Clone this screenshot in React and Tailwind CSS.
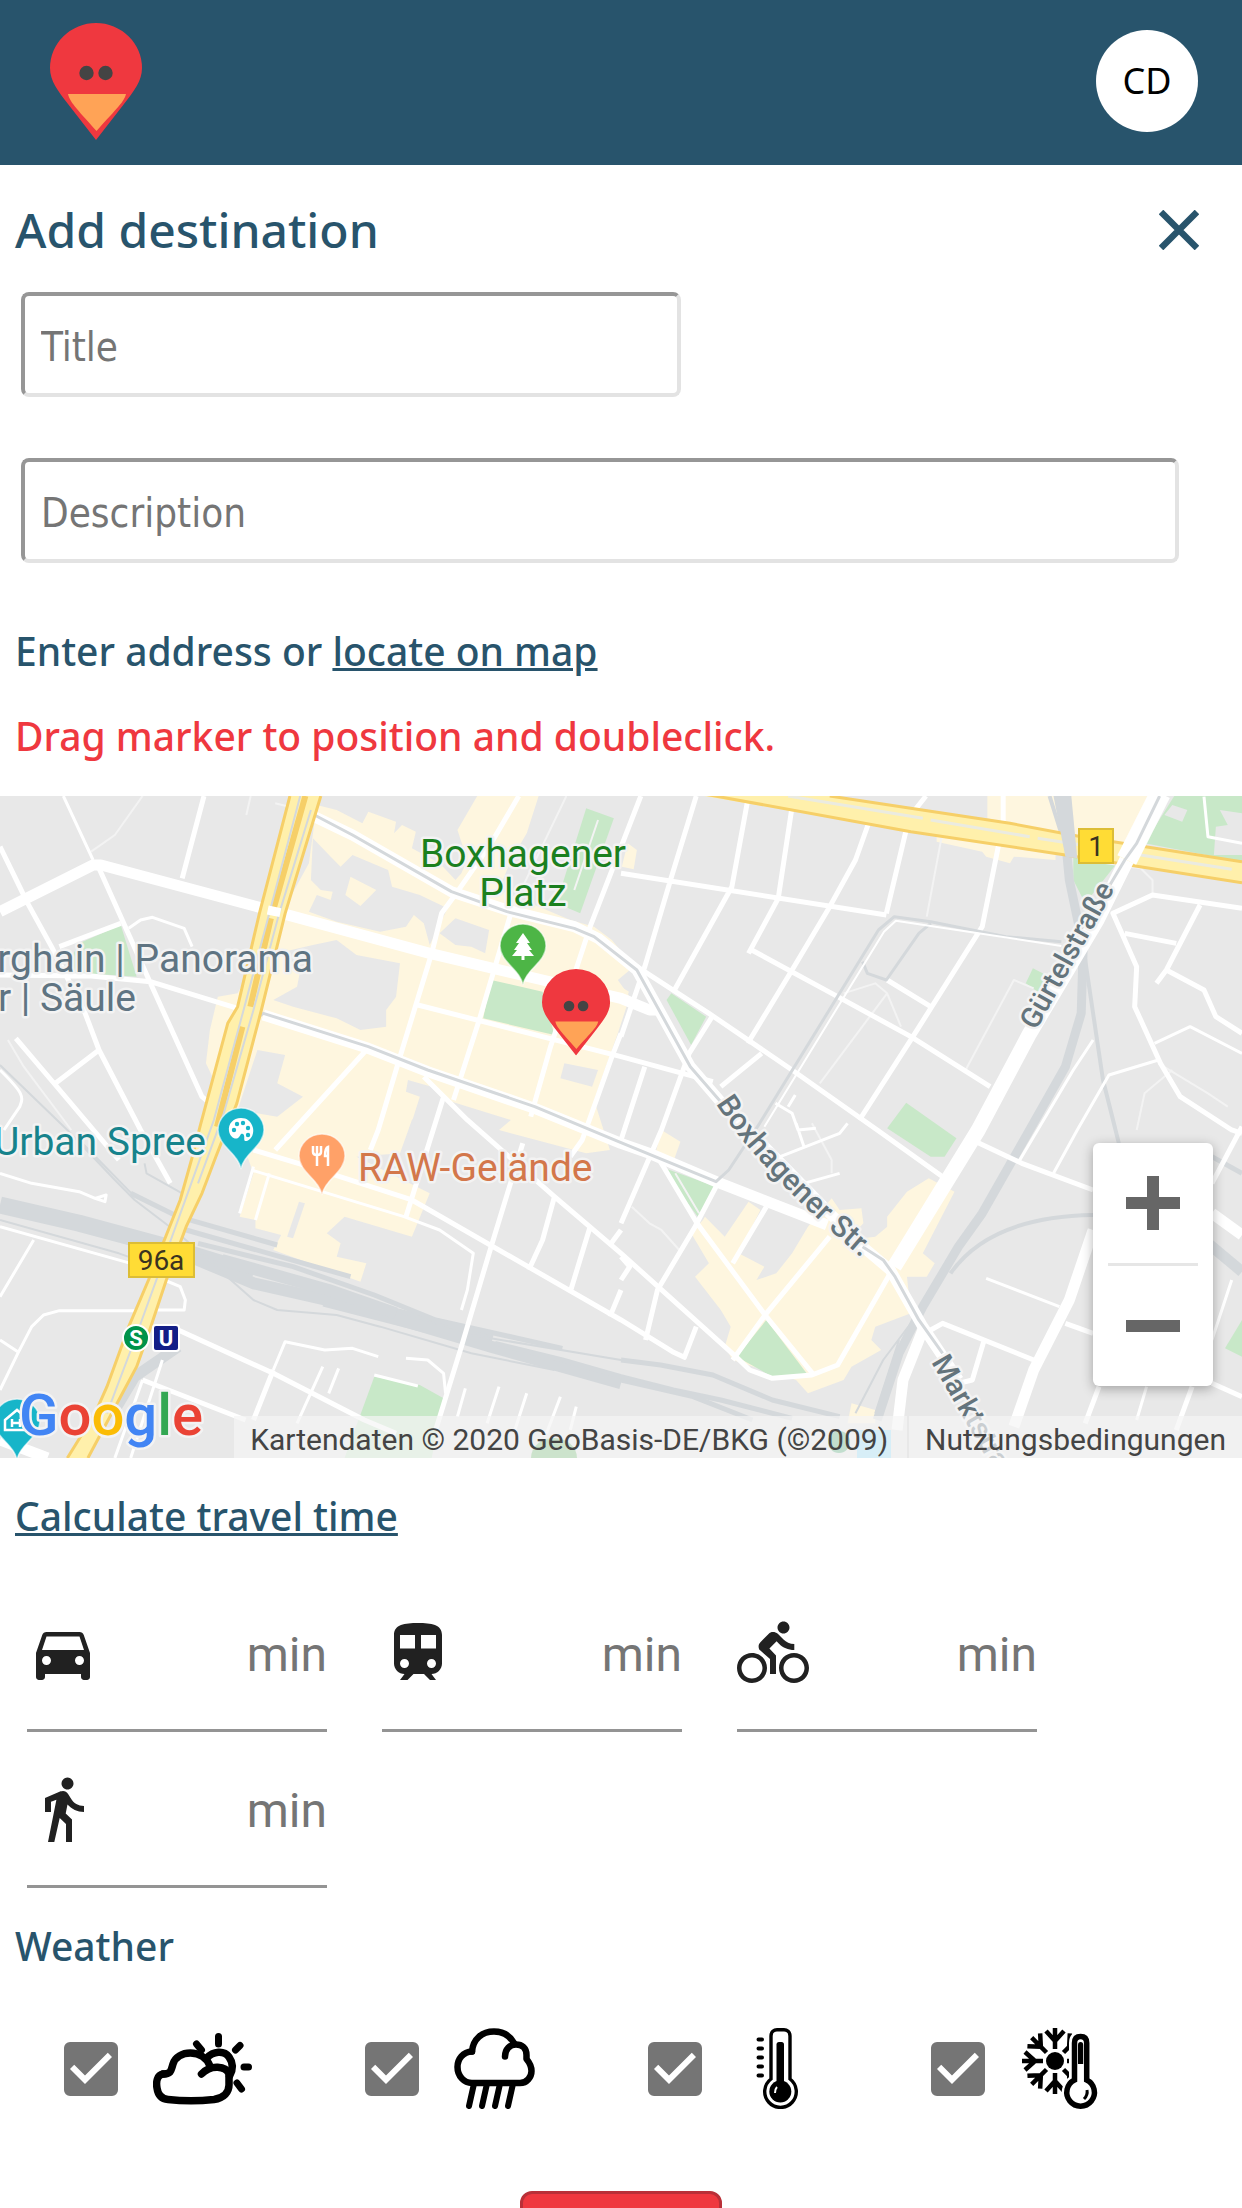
import React from "react";
import { MdCheckBox, MdDirectionsBike, MdDirectionsCar, MdDirectionsWalk } from "react-icons/md";

const SANS = "font-['Noto_Sans','Open_Sans',sans-serif]";

function BirdPin({ className, ...rest }) {
  return (
    <svg viewBox="0 0 92 117" className={className} aria-hidden="true" {...rest}>
      <path d="M46 117L18 81C8 68 0 58 0 45A46 45 0 0 1 92 45C92 58 84 68 74 81Z" fill="#ef383f" />
      <circle cx="36.500" cy="50" r="7.200" fill="#444" />
      <circle cx="55.500" cy="50" r="7.200" fill="#444" />
      <path d="M18 71H76C74 79 68 84 46.500 108C25 84 20 79 18 71Z" fill="#ffa356" />
    </svg>
  );
}

function TrainIcon({ className }) {
  return (
    <svg viewBox="0 0 24 24" fill="currentColor" className={className} aria-hidden="true">
      <path d="M12 2c-4.420 0-8 .5-8 4v9.500C4 17.430 5.570 19 7.500 19L6 21h2.500l2-2h3.500l2 2H18l-1.500-2c1.930 0 3.500-1.570 3.500-3.500V6c0-3.500-3.580-4-8-4zM7.500 17c-.83 0-1.500-.67-1.500-1.500S6.670 14 7.500 14s1.500.67 1.500 1.500S8.330 17 7.500 17zm3.500-6.500H6V6h5v4.500zm5.500 6.500c-.83 0-1.500-.67-1.500-1.500s.67-1.500 1.500-1.500 1.500.67 1.500 1.500-.67 1.500-1.500 1.500zm1.500-6.500h-5V6h5v4.500z" />
    </svg>
  );
}

function SunCloud() {
  return (
    <svg viewBox="0 0 99 81" className="h-[81px] w-[99px]" fill="none" stroke="#000" strokeLinecap="round" strokeLinejoin="round" aria-hidden="true">
      <g strokeWidth="7.500">
        <path d="M10 46C4 47 3 54 4 60C5 67 9 71 15 71.500C28 73 48 73 61 71.500C71 70 76 64 76 57V46C73 38 58 36 48.500 46" />
        <path d="M10 46C18 46 18 43 20 36C24 22 50 20 57 38" />
        <path d="M54 30C60 23 71 22 76 29C81 36 80 42 76.500 48" />
      </g>
      <g strokeWidth="7">
        <path d="M65.500 8.500V16M43.500 16L48.500 22M87 17.500L82.500 22M91 39H95.500M84 55L88.500 61" />
      </g>
    </svg>
  );
}

function RainCloud() {
  return (
    <svg viewBox="0 0 81 81" className="size-[81px]" fill="none" stroke="#000" strokeLinecap="round" strokeLinejoin="round" aria-hidden="true">
      <g strokeWidth="6.500">
        <path d="M18 23.500C9 24 3.500 31 3.500 39C3.500 48 10 55 18 55H66C73 55 77.500 49 77.500 43C77.500 37 75 34 72.500 31V27C72.500 20 68 16.500 62 16.500C56 16.500 51 21 51 28.500" />
        <path d="M18 23.500C19 11 28 3.500 40 3.500C49 3.500 56 8 60 15" />
      </g>
      <path strokeWidth="6" d="M19.500 58L15 78M32.500 58L28 78M45.500 58L41 78M58.500 58L54 78" />
    </svg>
  );
}

function Thermometer() {
  return (
    <svg viewBox="-20 0 81 81" className="size-[81px]" aria-hidden="true">
      <path d="M14 51V8C14 4 17 1.700 20 1.700H27C30 1.700 33 4 33 8V51A15.800 15.800 0 1 1 14 51Z" fill="#fff" stroke="#000" strokeWidth="3.400" />
      <path d="M19.500 56V16.500Q19.500 14 22 14H24.500Q27 14 27 16.500V56Z" />
      <circle cx="23.300" cy="63.500" r="11" />
      <path d="M20 59Q18 61 18 65" fill="none" stroke="#fff" strokeWidth="2" />
      <path d="M1.500 11.500H5M1.500 20.500H5M1.500 29.500H5M1.500 38.500H5M1.500 47.500H5" stroke="#000" strokeWidth="4" strokeLinecap="round" />
    </svg>
  );
}

const FLAKE_ARMS = [0, 45, 90, 135, 180, 225, 270, 315];

function SnowThermometer() {
  return (
    <svg viewBox="-2 0 81 81" className="size-[81px]" aria-hidden="true">
      <circle cx="33" cy="33" r="9" />
      {FLAKE_ARMS.map((a) => (
        <path key={a} transform={`rotate(${a} 33 33)`} d="M33 21V0M33 13L24 3M33 13L42 3" fill="none" stroke="#000" strokeWidth="4.500" />
      ))}
      <path d="M52 52V15Q52 8 58.600 8Q65.500 8 65.500 15V52A14 14 0 1 1 52 52Z" fill="#fff" stroke="#fff" strokeWidth="10" />
      <path d="M52.500 52V15Q52.500 8.500 58.600 8.500Q64.700 8.500 64.700 15V52A13.800 13.800 0 1 1 52.500 52Z" fill="#fff" stroke="#000" strokeWidth="5.500" />
      <path d="M56 36V17Q56 14 58.600 14Q61.200 14 61.200 17V36Z" />
      <path d="M65 62Q66 67 62 71" fill="none" stroke="#000" strokeWidth="3" />
    </svg>
  );
}

/* Base map geometry: survey units, scaled into the 1242 x 662 map frame. */
const BLOCKS = [
  "M800 75L850 90L915 130L930 95L1000 125L995 160L1015 135L1050 155L1040 205L1110 250L1150 300L1165 280L1180 240L1155 150L1205 48H1360L1330 160L1290 240L1260 330L1440 420L1500 440L1545 480L1600 560L1560 600L1590 650L1560 760L1500 960L1540 1110L1480 1120L1260 1050L1290 1020L1100 950L1040 1020L1010 1120L900 1130L1085 1240L1040 1370L870 1310L825 1360L860 1390L850 1430L925 1450L910 1505L690 1410L710 1365L645 1345V1320L605 1310L640 1180L600 1050L520 850L530 750L550 650L600 640L780 250Z",
  "M2493 48H2900L2850 190L2700 175L2493 115Z",
  "M2365 160L2560 195L2665 220V240L2560 230L2550 250L2490 230L2480 215L2365 185Z",
  "M1570 260L1585 190L1608 210L1600 268Z",
  "M1568 620L1588 635L1580 660L1568 650Z",
  "M1670 1050L1718 1085L1700 1145L1655 1120Z",
  "M1775 1320L1780 1310L1830 1370L1890 1265L1920 1290L1865 1420L1930 1460L1910 1500L1960 1480L2000 1420L2040 1340L2060 1310L2100 1255L2120 1290L2175 1285L2180 1330L2140 1380L2210 1370L2240 1340V1310L2290 1235L2345 1195L2410 1235L2330 1420L2360 1450L2340 1490L2290 1490L2300 1600L2210 1640L2200 1680L2225 1710L2150 1760L2130 1800L2040 1840L2010 1800L1850 1740L1830 1700L1845 1640L1820 1590L1755 1490L1790 1450L1745 1360Z",
  "M2150 1870L2210 1890V1930H2140Z",
];
const HOLES = [
  "M790 175L835 230L860 260L890 225L980 270L990 320L1060 345L1130 385L1085 495L1070 430L1045 405L1025 440L960 455L850 425L780 395L800 345L835 360L840 335L810 330L785 300Z",
  "M790 495L850 480L900 525L1010 550L1000 650L975 690L975 740L910 750L850 715L740 680L690 660L750 620L760 560L700 520Z",
  "M1110 460L1150 415L1235 450L1225 520L1190 500L1150 495Z",
  "M650 810L720 825L700 910L765 950L700 1010L600 990Z",
  "M1425 850L1510 870L1495 920L1415 895Z",
  "M1030 900L1090 920L1150 1000L1080 1100L1020 1100L1060 950L1025 935Z",
  "M755 1265L770 1270L740 1375L725 1370Z",
];
const PARKS = [
  "M1480 85L1550 115L1465 400L1405 370Z",
  "M200 490L305 435L345 590L160 575Z",
  "M1240 600L1370 635L1400 765L1220 715Z",
  "M2965 48H3136V245L2890 190Z",
  "M2710 225L2820 250L2740 370L2710 300Z",
  "M2608 565L2650 590L2625 640L2590 610Z",
  "M1695 640L1783 710L1745 795L1683 660Z",
  "M2288 968L2415 1075L2385 1130L2350 1130L2240 1045Z",
  "M1668 1160L1808 1220L1765 1315Z",
  "M1935 1620L2040 1785L1950 1790L1860 1730Z",
  "M945 1790L1060 1815L1120 1855L1090 2034H870Z",
  "M3136 1620L3093 1705L3136 1730Z",
];
const LANES = [
  "M360 48L290 165L230 215M633 48L622 105M695 70L735 82M1430 48L1320 320M20 780L60 860L180 1050",
  "M2380 155L2340 410M2438 870L2560 600L2610 625M2130 640L2210 610L2240 640L2275 740M2240 640L2070 910M2740 240L2880 265L2910 300V345",
  "M1595 1280L1640 1330L1670 1350L1715 1410M1705 1180L1765 1300M1510 120L1450 330M2050 1030L2100 1140L2100 1180",
  "M2960 870L2890 940L2870 1050M2925 850L3050 940L3100 980",
];
const STREETS_THIN = [
  "M160 48L235 240M325 445L355 420L385 412L465 445L485 500M0 870C60 940 60 950 50 980L10 1050M0 1180L80 1210L200 1235L240 1255L265 1265L268 1245L240 1255M0 1340L330 1450M85 1380L0 1550M345 1592H150L110 1605L80 1640L45 1720L0 1830M0 1680L45 1715M415 1500L455 1520L468 1560L465 1590H380",
  "M635 1170L1020 1310L1110 1350L1195 1420L1180 1530L1165 1590M680 1180L645 1320M640 1160L605 1300M690 1770L720 1685L820 1710L890 1705L955 1730M815 1760L750 1930M855 1765L830 1840M1025 1735L1080 1740L1120 1780L1125 1840M410 1740L330 2034M360 1800L290 2034M945 1785L1055 1818M1175 1825L1155 1910M1260 1820L1230 1930M1330 1840L1300 1950M1415 1850L1380 1960M1455 1880L1440 1950",
  "M2915 790L3005 740L3136 820M2925 840L2800 885L2720 1050L2660 1180M2760 780L2710 870L2570 1150M2490 1495L2675 1580M3110 1500L3060 1680M1970 1130L2120 1060L2140 1030M2010 1030L2030 1100M1958 970L2000 1000L2015 1050L2060 1045M2008 945L1990 980M2030 1210L2120 1180M3040 50L3050 170L3136 190M2895 1820L2870 1920",
];
const STREETS = [
  "M515 48L460 295M0 200L70 370L130 500L215 700L250 810L355 1050L430 1210M250 265L305 410L380 610L510 950L525 965M305 430L150 500M0 585L230 588L380 605L600 685M40 775L140 915L300 1140M140 910L250 810",
  "M1310 48L1240 190L1155 335L1115 400L1090 520L1010 830L955 1050L935 1110M1290 400L1210 720L1145 960M1618 48L1490 440L1440 620L1390 800L1340 1010M1055 675L1568 830L1800 905M925 810L695 1110M1568 760L1545 830L1470 1080L1440 1130M1120 950L1025 1310",
  "M1070 890L1180 1020L1400 1250L1568 1420L1858 1730L1893 1770L1950 1795L2050 1785L2115 1755L2250 1475M640 1110L780 1160L1040 1260L1568 1620L1698 1715L1728 1732L1758 1640M1320 1090L1240 1400L1165 1700L1100 1950M1400 1250L1370 1380L1335 1470M1490 1340L1440 1535M1568 1350L1540 1395M1568 1530L1540 1610",
  "M450 1650L690 1780L920 1920L1000 1960M360 1800L620 1920M690 1770L640 1920",
  "M1568 280L2238 405M1758 48L1693 300L1628 560L1568 770M1888 60L1848 320L1703 630M2000 80L1965 355L1890 520M2196 120L2160 240L2095 380L2000 570L1888 790M2290 140L2238 400M2523 185L2480 440L2305 770L2170 1020M1898 510L2100 640L2300 770L2500 920",
  "M1608 560L1790 700L2000 870L2215 1050L2380 1190M1798 710L1740 820L1670 1050L1568 1330M1923 820L1820 920M1628 860L1568 1080M2240 600L2350 680M2338 48L2310 90",
  "M3136 385L2910 345L2810 400L2870 560L2865 680L2930 850L2980 950L3110 1050L3136 1060M3030 375L2945 570L2920 610M2840 460L2970 490M2945 570L3040 630L3070 710L3136 760",
  "M2455 1080L2580 1150L2760 1230M2690 1630L2760 1660M2350 1650L2380 1630L2610 1740M2485 1680L2455 1800L2420 1810M1935 1280L1850 1450M1660 1130L1760 1330L1935 1610L2055 1785M2095 1370L1935 1600L1850 1740M1808 1220L1755 1340L1660 1530L1630 1680M2775 1820L2740 1930M3010 1820L2970 1950M3136 1850L3060 1810M3136 1040L3060 1210M1568 1430L1590 1460L1568 1500M2533 48V130",
];
const AVENUES = [
  "M0 395L235 255L255 255L665 385L1085 520L1370 600L1568 655L1640 690L1665 690",
  "M2330 1650L2280 1800L2265 1950M2760 1350L2700 1560L2610 1770L2560 1940M3060 1300L3136 1365M0 1980L120 2034",
];

const fixedWidth = { vectorEffect: "non-scaling-stroke" };

function Strokes({ d, color, width }) {
  return d.map((p) => <path key={p} d={p} stroke={color} strokeWidth={width} style={fixedWidth} />);
}

function Shapes({ d, fill }) {
  return d.map((p) => <path key={p} d={p} fill={fill} stroke="none" />);
}

function PlacePin({ x, y, color, children }) {
  return (
    <g transform={`translate(${x} ${y})`}>
      <path d="M0 61C-3 45-23 38-23 22A23 22 0 0 1 23 22C23 38 3 45 0 61Z" fill={color} stroke="#fff" strokeOpacity=".6" strokeWidth="1.500" />
      {children}
    </g>
  );
}

const ROBOTO = "font-['Roboto',sans-serif]";
const halo = { stroke: "#f3f3f3", strokeWidth: 5, strokeLinejoin: "round", paintOrder: "stroke" };

function MapDrawing() {
  return (
    <svg viewBox="0 0 1242 662" preserveAspectRatio="xMidYMid slice" className={`block h-full w-full font-normal ${ROBOTO}`} role="img" aria-label="Karte">
      <rect width="1242" height="662" fill="#e8e8e8" />
      <g transform="translate(0 -16) scale(.39605 .33333)" fill="none" strokeLinejoin="round">
        <Shapes d={BLOCKS} fill="#fef6df" />
        <Shapes d={HOLES} fill="#e8e8e8" />
        <path d="M885 290L950 330L910 378L872 345Z" fill="#fef6df" />
        <Shapes d={PARKS} fill="#c8e8c8" />
        <path d="M2960 75L2998 90L2985 125L2940 105ZM3080 90L3136 100V225L3065 225L3070 140L3100 135Z" fill="#e8e8e8" />

        <Strokes color="#d4d8db" width={17} d={["M0 1275L200 1330L420 1400L640 1480", "M820 1555L1100 1640L1240 1690"]} />
        <Strokes color="#d4d8db" width={12} d={["M420 1400L640 1510L900 1580L1240 1700L1420 1760L1568 1810", "M560 1440L830 1530L1000 1600"]} />
        <Strokes color="#d4d8db" width={5} d={["M330 1240L450 1310L700 1395M470 1350L885 1490M500 1390L740 1460L945 1545L1100 1620L1420 1705M1250 1690L1420 1740L1568 1790L1700 1830L1820 1860L2000 1915", "M1568 1740L1668 1755L1800 1785L1950 1860L2120 1910M1568 1800L1750 1850L1900 1920M3060 1130L3136 1180"]} />
        <Strokes color="#d4d8db" width={2} d={["M0 855L170 1050L290 1200L340 1260L450 1360L640 1560L700 1590L850 1605L960 1640L1190 1720L1400 1770M365 1150L370 1180L460 1240M0 1320L300 1420L420 1470M1190 1665L1568 1740M200 1080L340 1250M2325 1590L2230 1740L2160 1900M2270 1680L2210 1900"]} />
        <Strokes color="#d4d8db" width={9} d={["M2680 48L2700 300L2735 500L2730 700L2690 860L2590 1070L2480 1300L2420 1400L2330 1580L2270 1720L2215 1920"]} />
        <Strokes color="#d4d8db" width={4} d={["M2650 48L2690 200M2735 500L2760 700L2785 900L2825 1090M2400 1480Q2500 1310 2760 1305"]} />
        <Strokes color="#d4d8db" width={11} d={["M3050 1390L3136 1475", "M450 1700L340 1790L290 1890"]} />

        <Strokes color="#f3f3f3" width={2} d={LANES} />
        <Strokes color="#fff" width={3} d={STREETS_THIN} />
        <Strokes color="#fff" width={5} d={STREETS} />
        <Strokes color="#fff" width={11} d={AVENUES} />

        <Strokes color="#fff" width={11} d={["M785 105L890 165L1140 335L1280 390L1450 440L1510 475L1608 570L1743 860L1823 970L2178 1400L2248 1470L2330 1640L2420 1800", "M665 705L930 805L1080 875L1350 985L1568 1090L1640 1120L1808 1205L2088 1335"]} />
        <Strokes color="#d4d8db" width={3} d={["M770 90L890 165L1140 335L1280 395L1450 445L1500 470L1608 570L1743 860L1823 970M2178 1400L2230 1440L2260 1490L2320 1620L2380 1720", "M620 740L665 700L930 800L1080 870L1350 980L1568 1088L1808 1205L1840 1170L1918 1030L2218 450L2258 410L2350 425L2540 470L2680 485M2178 545L2190 580L2238 600L2320 460L2350 430"]} />
        <Strokes color="#fff" width={2} d={["M1930 1040L2232 455L2262 422L2680 498"]} />

        <path d="M1778 48H2095L2550 130L2730 170L3136 245V308L2690 225L2300 155Z" fill="#fff0ab" />
        <Strokes color="#f6cf68" width={3} d={["M2095 48L2550 130L2730 170L3136 245M3136 308L2690 225L2300 155L1778 42"]} />
        <Strokes color="#ebebe0" width={3} d={["M1990 48L2330 115M2350 120L2600 170M2620 175L2760 200M2880 225L3110 268"]} />
        <path d="M2660 48H2705L2720 235L2690 230Z" fill="#d4d8db" />
        <Strokes color="#fff" width={21} d={["M2930 40L2845 240"]} />
        <Strokes color="#fff" width={15} d={["M2845 240L2770 420L2600 760L2470 1050L2258 1460"]} />
        <Strokes color="#d4d8db" width={3} d={["M2928 48L2870 190L2840 240L2790 340"]} />

        <path d="M732 48L655 400L600 680L575 730L505 1040L488 1120L455 1260L415 1380L375 1500L325 1640L270 1820L240 1900L170 2034H222L300 1860L345 1760L378 1650L420 1500L470 1340L510 1240L545 1130L598 970L660 690L720 400L810 48Z" fill="#fff0ab" />
        <Strokes color="#f6cf68" width={3} d={["M732 48L655 400L600 680L575 730L505 1040L488 1120L455 1260L415 1380L375 1500L325 1640L270 1820L240 1900L170 2034M222 2034L300 1860L345 1760L378 1650L420 1500L470 1340L510 1240L545 1130L598 970L660 690L720 400L810 48"]} />
        <Strokes color="#f6cf68" width={6} d={["M771 48L690 390M684 415L632 680M612 740L548 1040"]} />
        <Strokes color="#d4d8db" width={2} d={["M758 48L680 400L615 690L540 1020L480 1220L340 1680L270 1900M785 90L705 400L640 690L565 1000L500 1210"]} />
        <Strokes color="#fff" width={9} d={["M676 390L708 398"]} />
      </g>

      <g fontSize="39">
        <g fill="#1b801f" textAnchor="middle">
          <text x="523" y="71" style={halo}>Boxhagener</text>
          <text x="523" y="110" style={halo}>Platz</text>
        </g>
        <g fill="#5f7482" textAnchor="end">
          <text x="313" y="176" style={halo}>rghain | Panorama</text>
          <text x="136" y="215" style={halo}>r | Säule</text>
        </g>
        <text x="206" y="359" textAnchor="end" fill="#17838c" style={halo}>Urban Spree</text>
        <text x="358" y="385" fill="#d3774b" style={halo}>RAW-Gelände</text>
      </g>

      <g fontSize="29" fontWeight="500" fill="#64747c">
        <text transform="translate(1036 235) rotate(-61)" style={halo}>Gürtelstraße</text>
        <path id="boxhagener-strasse" d="M716 308Q760 378 890 486" fill="none" />
        <text fontSize="30" style={halo}><textPath href="#boxhagener-strasse">Boxhagener Str.</textPath></text>
        <text transform="translate(931 566) rotate(60)" style={halo}>Marktstraße</text>
      </g>

      <PlacePin x="523" y="128" color="#4db546">
        <path d="M0 9L7 19H4L9 26H6L11 32H1.500V36H-1.500V32H-11L-6 26H-9L-4 19H-7Z" fill="#fff" />
      </PlacePin>
      <PlacePin x="241" y="312" color="#17b5c9">
        <path d="M0 10C-8 10-13 16-12 23C-11 29-6 32-3 30C0 28-1 25 2 26C5 28 1 34 6 33C11 31 13 25 12 20C10 13 6 10 0 10Z" fill="#fff" />
        <g fill="#17b5c9"><circle cx="-7" cy="22" r="2.200" /><circle cx="-4" cy="16" r="2.200" /><circle cx="2" cy="15" r="2.200" /><circle cx="7" cy="20" r="2.200" /><circle cx="7" cy="27" r="2.200" /></g>
      </PlacePin>
      <PlacePin x="322" y="338" color="#ffa168">
        <path d="M-9 12V18Q-9 21-5 21Q-1 21-1 18V12M-5 12V32M6 32V13Q3 14 3 22H6" fill="none" stroke="#fff" strokeWidth="2.500" />
      </PlacePin>
      <PlacePin x="17" y="603" color="#17b5c9">
        <path d="M-12 21L0 11L12 21V31H-12ZM-5 20V28M3 20V28M-5 24H3" fill="none" stroke="#fff" strokeWidth="2.500" />
      </PlacePin>

      <g fontSize="28" textAnchor="middle" fill="#3a3320">
        <rect x="1079" y="33" width="34" height="34" fill="#ffdc35" stroke="#dcbd36" strokeWidth="2" />
        <text x="1096" y="60">1</text>
        <rect x="129" y="447" width="65" height="34" fill="#ffdc35" stroke="#dcbd36" strokeWidth="2" />
        <text x="161" y="474">96a</text>
      </g>
      <g fontWeight="700" textAnchor="middle" fill="#fff">
        <circle cx="136" cy="542" r="13" fill="#00934a" stroke="#fff" strokeWidth="2" />
        <text x="136" y="550" fontSize="22">S</text>
        <rect x="153" y="529" width="26" height="26" rx="3" fill="#131e87" stroke="#fff" strokeWidth="2" />
        <text x="166" y="550" fontSize="22">U</text>
      </g>
      <circle cx="839" cy="646" r="11" fill="#4aa874" />
      <rect x="857" y="634" width="34" height="28" fill="#8fdcfa" />
      <path d="M531 662A23 20 0 0 1 577 662Z" fill="#6db96d" />

      <text x="19" y="639" fontSize="58" fontWeight="500" style={halo}>
        <tspan fill="#4285f4">G</tspan><tspan fill="#ea4335">o</tspan><tspan fill="#fbbc05">o</tspan><tspan fill="#4285f4">g</tspan><tspan fill="#34a853">l</tspan><tspan fill="#ea4335">e</tspan>
      </text>

      <g transform="translate(542 173) scale(.74)">
        <BirdPin width="92" height="117" />
      </g>
    </svg>
  );
}

function MapPanel() {
  return (
    <section aria-label="Map" className="relative mt-[34px] h-[662px] overflow-hidden">
      <MapDrawing />
      <div className="absolute right-[29px] bottom-[72px] flex w-[120px] flex-col items-center rounded-md bg-white shadow-[0_3px_12px_rgba(0,0,0,0.3)]">
        <button type="button" aria-label="Zoom in" className="flex h-[120px] w-full items-center justify-center">
          <svg viewBox="0 0 54 54" className="size-[54px]" aria-hidden="true"><path d="M21 0H33V21H54V33H33V54H21V33H0V21H21Z" fill="#666" /></svg>
        </button>
        <div className="h-[3px] w-[90px] bg-[#e6e6e6]" />
        <button type="button" aria-label="Zoom out" className="flex h-[120px] w-full items-center justify-center">
          <svg viewBox="0 0 54 12" className="h-[12px] w-[54px]" aria-hidden="true"><path d="M0 0H54V12H0Z" fill="#666" /></svg>
        </button>
      </div>
      <div className={`absolute right-0 bottom-0 flex h-[42px] gap-[2px] text-[30px] leading-[48px] font-normal whitespace-nowrap text-[#444] ${ROBOTO}`}>
        <span className="bg-[#f5f5f5]/70 pr-[19px] pl-4">Kartendaten © 2020 GeoBasis-DE/BKG (©2009)</span>
        <a href="#terms" className="bg-[#f5f5f5]/70 px-4">Nutzungsbedingungen</a>
      </div>
    </section>
  );
}

const TRAVEL = [
  { id: "car", label: "By car", Icon: MdDirectionsCar },
  { id: "transit", label: "By train", Icon: TrainIcon },
  { id: "bike", label: "By bike", Icon: MdDirectionsBike },
  { id: "walk", label: "On foot", Icon: MdDirectionsWalk },
];

const WEATHER = [
  { id: "sunny", label: "Sun and clouds", Icon: SunCloud },
  { id: "rain", label: "Rain", Icon: RainCloud },
  { id: "warm", label: "Warm", Icon: Thermometer },
  { id: "cold", label: "Cold", Icon: SnowThermometer },
];

const FIELD =
  "block h-[105px] rounded-lg border-4 border-t-[#969696] border-r-[#e3e3e3] border-b-[#e3e3e3] border-l-[#969696] bg-white px-4 pt-1 text-[40px] text-black placeholder:text-[#757575] font-['DejaVu_Sans_Condensed','Noto_Sans',sans-serif]";

export default function App() {
  return (
    <div className={`min-h-screen bg-white text-[39px] leading-[52px] font-medium text-[#28546c] ${SANS}`}>
      <header className="flex h-[165px] items-center justify-between bg-[#28546c] pr-[44px] pb-[3px] pl-[50px]">
        <a href="#home" aria-label="Home"><BirdPin className="block h-[117px] w-[92px]" /></a>
        <button type="button" aria-label="Account" className="size-[102px] rounded-full bg-white text-[36px] font-normal text-black">CD</button>
      </header>

      <main>
        <div className="mt-[33px] flex h-[63px] items-center justify-between pr-[43px] pl-[15px]">
          <h1 className="text-[48px] leading-[64px] font-medium">Add destination</h1>
          <button type="button" aria-label="Close">
            <svg viewBox="0 0 40 40" className="size-10" aria-hidden="true"><path d="M2 2L38 38M38 2L2 38" stroke="#28546c" strokeWidth="6.500" /></svg>
          </button>
        </div>

        <form>
          <div className="mt-[31px] flex flex-col gap-[61px] pr-[63px] pl-[21px]">
            <input aria-label="Title" placeholder="Title" className={`${FIELD} w-[57%]`} />
            <input aria-label="Description" placeholder="Description" className={`${FIELD} w-full`} />
          </div>

          <p className="mt-[62px] pl-[15px]">Enter address or <a href="#map" className="underline">locate on map</a></p>
          <p className="mt-[33px] pl-[15px] text-[#ef383f]">Drag marker to position and doubleclick.</p>

          <MapPanel />

          <p className="mt-8 pl-[15px]"><a href="#travel" className="underline">Calculate travel time</a></p>

          <div className="mt-[58px] flex flex-wrap gap-x-[55px] gap-y-6 pl-[27px]">
            {TRAVEL.map(({ id, label, Icon }) => (
              <label key={id} className="flex w-[300px] items-center border-b-[3px] border-[#949494] pt-[17px] pb-10">
                <Icon className="size-[72px] shrink-0 text-[#212121]" />
                <input aria-label={label} placeholder="min" className="h-[72px] w-full min-w-0 bg-transparent pt-[2px] text-right font-['Roboto',sans-serif] text-[48px] font-normal text-black outline-none placeholder:text-[#757575]" />
              </label>
            ))}
          </div>

          <h2 className="mt-8 pl-[15px]">Weather</h2>
          <div className="mt-14 flex flex-wrap gap-x-[104px] pl-[55px]">
            {WEATHER.map(({ id, label, Icon }) => (
              <label key={id} className="relative flex items-center gap-[26px]">
                <input type="checkbox" defaultChecked aria-label={label} className="absolute top-[14px] left-[9px] size-[54px] appearance-none" />
                <MdCheckBox className="size-[72px] text-[#757575]" aria-hidden="true" />
                <Icon />
              </label>
            ))}
          </div>

          <button type="submit" aria-label="Save" className="mx-auto mt-[82px] block h-[90px] w-[202px] rounded-xl border-[3px] border-[#b93038] bg-[#ef383f]" />
        </form>
      </main>
    </div>
  );
}
